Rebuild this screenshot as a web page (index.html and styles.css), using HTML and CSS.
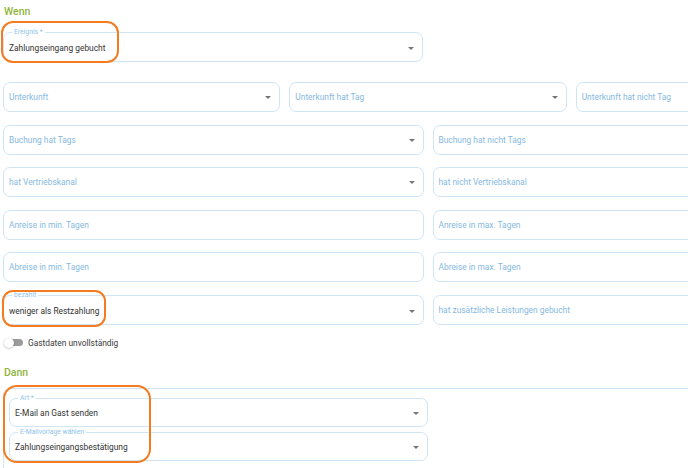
FILE: index.html
```html
<!DOCTYPE html>
<html lang="de">
<head>
<meta charset="utf-8">
<title>Regel</title>
<link rel="stylesheet" href="styles.css">
</head>
<body>
<div class="page">
  <h2 class="section-title">Wenn</h2>

  <div class="half first">
    <div class="field labeled">
      <span class="flabel">Ereignis *</span>
      <span class="value">Zahlungseingang gebucht</span>
      <span class="arrow"></span>
    </div>
  </div>

  <div class="rows">
    <div class="grid3">
      <div class="field"><span class="ph">Unterkunft</span><span class="arrow"></span></div>
      <div class="field"><span class="ph">Unterkunft hat Tag</span><span class="arrow"></span></div>
      <div class="field"><span class="ph">Unterkunft hat nicht Tag</span></div>
    </div>
    <div class="grid2">
      <div class="field"><span class="ph">Buchung hat Tags</span><span class="arrow"></span></div>
      <div class="field"><span class="ph">Buchung hat nicht Tags</span></div>
    </div>
    <div class="grid2">
      <div class="field"><span class="ph">hat Vertriebskanal</span><span class="arrow"></span></div>
      <div class="field"><span class="ph">hat nicht Vertriebskanal</span></div>
    </div>
    <div class="grid2">
      <div class="field"><span class="ph">Anreise in min. Tagen</span></div>
      <div class="field"><span class="ph">Anreise in max. Tagen</span></div>
    </div>
    <div class="grid2">
      <div class="field"><span class="ph">Abreise in min. Tagen</span></div>
      <div class="field"><span class="ph">Abreise in max. Tagen</span></div>
    </div>
    <div class="grid2">
      <div class="field labeled">
        <span class="flabel">bezahlt</span>
        <span class="value">weniger als Restzahlung</span>
        <span class="arrow"></span>
      </div>
      <div class="field"><span class="ph">hat zusätzliche Leistungen gebucht</span></div>
    </div>
  </div>

  <div class="toggle-row">
    <span class="switch"></span>
    <span class="toggle-label">Gastdaten unvollständig</span>
  </div>

  <h2 class="section-title dann">Dann</h2>

  <div class="action-box">
    <div class="field labeled action">
      <span class="flabel">Art *</span>
      <span class="value">E-Mail an Gast senden</span>
      <span class="arrow"></span>
    </div>
    <div class="field labeled action">
      <span class="flabel">E-Mailvorlage wählen</span>
      <span class="value">Zahlungseingangsbestätigung</span>
      <span class="arrow"></span>
    </div>
  </div>

  <div class="mark mark-ereignis"></div>
  <div class="mark mark-bezahlt"></div>
  <div class="mark mark-dann"></div>
</div>
</body>
</html>
```

FILE: styles.css
```css
html, body {
  margin: 0;
  padding: 0;
  overflow: hidden;
  background: #ffffff;
}

body {
  font-family: Roboto, "Liberation Sans", Arial, sans-serif;
  color: #333333;
}

.page {
  position: relative;
  width: 850px;
  padding-left: 3px;
}

.section-title {
  margin: 0;
  padding-top: 5px;
  padding-left: 1px;
  font-size: 10.5px;
  line-height: 14px;
  font-weight: 500;
  color: #8fb53c;
}

.half {
  width: 420px;
}

.half.first {
  margin-top: 13px;
}

.rows {
  margin-top: 20px;
  display: flex;
  flex-direction: column;
  gap: 12.6px;
}

.grid3 {
  display: grid;
  grid-template-columns: repeat(3, 1fr);
  gap: 9px;
}

.grid2 {
  display: grid;
  grid-template-columns: repeat(2, 1fr);
  gap: 9px;
}

.field {
  position: relative;
  box-sizing: border-box;
  height: 30px;
  border: 1px solid #cfe5f6;
  border-radius: 7px;
  display: flex;
  align-items: center;
  padding: 0 8px 0 5px;
  font-size: 8.4px;
  background: #ffffff;
}

.field.labeled {
  padding-top: 2px;
}

.ph {
  flex: 1;
  color: #86b9e2;
  white-space: nowrap;
}

.value {
  flex: 1;
  color: #333333;
  white-space: nowrap;
}

.flabel {
  position: absolute;
  top: -5px;
  left: 8px;
  padding: 0 2px;
  font-size: 6.8px;
  line-height: 8px;
  color: #8fc3ea;
  background: #ffffff;
}

.arrow {
  width: 0;
  height: 0;
  border-left: 3px solid transparent;
  border-right: 3px solid transparent;
  border-top: 3px solid #767676;
  margin-top: 1px;
}

.toggle-row {
  margin-top: 11px;
  height: 14px;
  display: flex;
  align-items: center;
}

.switch {
  position: relative;
  margin-left: 6px;
  width: 14px;
  height: 7px;
  border-radius: 4px;
  background: #9b9b9b;
}

.switch::before {
  content: "";
  position: absolute;
  left: -5px;
  top: -1.5px;
  width: 10px;
  height: 10px;
  border-radius: 50%;
  background: #ffffff;
  box-shadow: 0 0.5px 2px rgba(0, 0, 0, 0.35);
}

.toggle-label {
  margin-left: 5px;
  font-size: 8.4px;
  color: #3a3a3a;
}

.section-title.dann {
  padding-top: 0;
  margin-top: 16px;
}

.action-box {
  margin-top: 8px;
  box-sizing: border-box;
  height: 120px;
  border: 1px solid #cfe5f6;
  border-radius: 7px;
  padding: 9px 0 0 5px;
  display: flex;
  flex-direction: column;
  gap: 5px;
}

.field.action {
  width: 419px;
  height: 29px;
}

.mark {
  position: absolute;
  box-sizing: border-box;
  border: 2.5px solid #f47b20;
  border-radius: 12px;
}

.mark-ereignis {
  left: 1px;
  top: 21px;
  width: 118px;
  height: 42px;
}

.mark-bezahlt {
  left: 2px;
  top: 290px;
  width: 104px;
  height: 37px;
  border-radius: 11px;
}

.mark-dann {
  left: 3px;
  top: 385px;
  width: 148px;
  height: 78px;
  border-radius: 14px;
}
```
